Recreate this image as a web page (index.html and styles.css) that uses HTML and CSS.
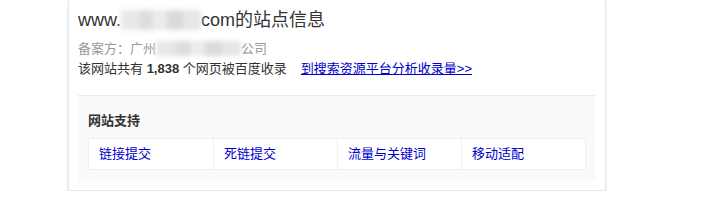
FILE: index.html
```html
<!DOCTYPE html>
<html lang="zh-CN">
<head>
    <meta charset="UTF-8">
    <meta name="viewport" content="width=device-width, initial-scale=1.0">
    <title>站点信息</title>
    <link rel="stylesheet" href="styles.css">
</head>
<body>
    <div class="site-card">
        <h3 class="site-title">www.<span class="mask mask-domain"></span>com的站点信息</h3>
        <p class="site-record">备案方：广州<span class="mask mask-company"></span>公司</p>
        <p class="site-index">该网站共有 <b>1,838</b> 个网页被百度收录<a class="site-link" href="#">到搜索资源平台分析收录量&gt;&gt;</a></p>

        <div class="support">
            <h4 class="support-title">网站支持</h4>
            <div class="support-grid">
                <a class="support-item" href="#">链接提交</a>
                <a class="support-item" href="#">死链提交</a>
                <a class="support-item" href="#">流量与关键词</a>
                <a class="support-item" href="#">移动适配</a>
            </div>
        </div>
    </div>
</body>
</html>
```

FILE: styles.css
```css
* {
    margin: 0;
    padding: 0;
    box-sizing: border-box;
}

body {
    font-family: "Liberation Sans", Arial, "Noto Sans CJK SC", sans-serif;
    font-size: 13px;
    color: #333;
    background: #fff;
}

.site-card {
    width: 538px;
    margin-left: 68px;
    padding: 8px 10px 9px 9px;
    background: #fff;
    border: 1px solid #e6e6e6;
    border-top: none;
    box-shadow: 0 1px 3px rgba(0, 0, 0, 0.1);
}

.site-title {
    font-size: 18px;
    font-weight: normal;
    line-height: 24px;
    color: #333;
    margin-bottom: 7px;
}

/* blurred-out part of the domain / company name */
.mask {
    display: inline-block;
    vertical-align: middle;
    filter: blur(2.5px);
    background:
        linear-gradient(90deg, #e8e8ea 0 22%, #dcdde0 22% 40%, #ececec 40% 58%, #d9dadd 58% 78%, #e6e6e8 78%);
}

.mask-domain {
    width: 80px;
    height: 20px;
    margin: -3px 0 0 0;
}

.mask-company {
    width: 85px;
    height: 15px;
    margin-top: -2px;
}

.site-record,
.site-index {
    line-height: 20px;
}

.site-record {
    color: #999;
}

.site-index b {
    font-weight: bold;
}

.site-link {
    color: #00c;
    margin-left: 14px;
}

.support {
    margin-top: 16px;
    padding: 15px 9px 11px 10px;
    background: #fafafa;
    border-top: 1px solid #ebebeb;
}

.support-title {
    font-size: 13px;
    font-weight: bold;
    line-height: 20px;
    color: #333;
    margin-bottom: 7px;
}

.support-grid {
    display: grid;
    grid-template-columns: repeat(4, 1fr);
    background: #fff;
    border: 1px solid #f0f0f0;
}

.support-item {
    display: block;
    line-height: 30px;
    padding-left: 10px;
    color: #00c;
    text-decoration: none;
    border-left: 1px solid #f0f0f0;
}

.support-item:first-child {
    border-left: none;
}
```
